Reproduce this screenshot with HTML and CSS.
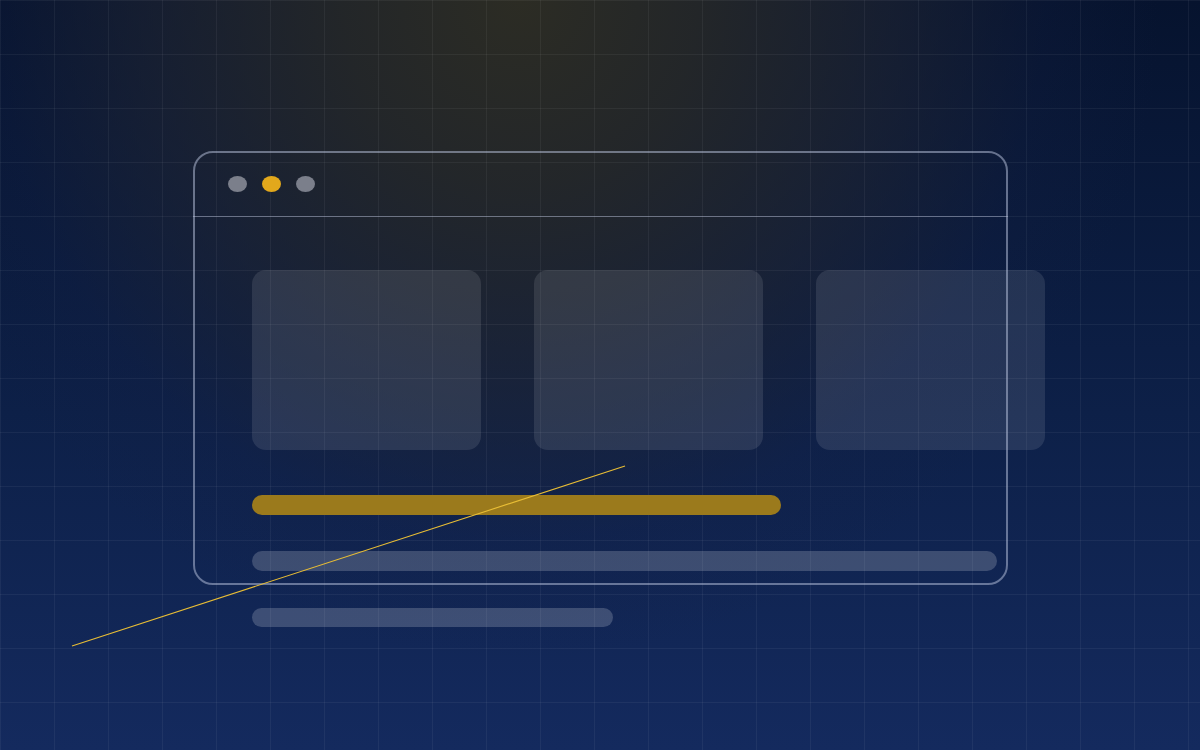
FILE: index.html
```html
<!DOCTYPE html>
<html lang="en">
<head>
<meta charset="utf-8">
<title>Browser illustration</title>
<link rel="stylesheet" href="styles.css">
</head>
<body>
<div class="stage">
  <div class="window">
    <div class="window-bar">
      <span class="dot dot-grey"></span>
      <span class="dot dot-gold"></span>
      <span class="dot dot-grey"></span>
    </div>
    <div class="window-body">
      <div class="cards">
        <div class="card"></div>
        <div class="card"></div>
        <div class="card"></div>
      </div>
      <div class="bar bar-gold"></div>
      <div class="bar bar-long"></div>
      <div class="bar bar-short"></div>
    </div>
  </div>
  <svg class="streak" width="1200" height="750" viewBox="0 0 1200 750" aria-hidden="true">
    <line x1="72" y1="646" x2="625" y2="466" stroke="#e8bd35" stroke-width="1.1"/>
  </svg>
</div>
</body>
</html>
```

FILE: styles.css
```css
html, body {
  margin: 0;
  padding: 0;
  width: 1200px;
  height: 750px;
  overflow: hidden;
  font-family: "Liberation Sans", Arial, sans-serif;
}

.stage {
  position: relative;
  width: 1200px;
  height: 750px;
  box-sizing: border-box;
  padding: 151px 0 0 193px;
  background-color: #0c1d44;
  background-image:
    linear-gradient(to right, rgba(255,255,255,0.05) 1px, transparent 1px),
    linear-gradient(to bottom, rgba(255,255,255,0.05) 1px, transparent 1px),
    radial-gradient(ellipse 640px 660px at 520px 0px, rgba(44,44,36,1) 0%, rgba(38,40,40,0.9) 28%, rgba(32,37,50,0.6) 58%, rgba(22,32,66,0.2) 82%, rgba(20,32,70,0) 100%),
    linear-gradient(to bottom, #06132e 0%, #0d2048 55%, #142a5e 100%);
  background-size: 54px 54px, 54px 54px, 100% 100%, 100% 100%;
  background-position: 0 0, 0 0, 0 0, 0 0;
  overflow: hidden;
}

.window {
  position: relative;
  width: 815px;
  height: 434px;
  box-sizing: border-box;
}

.window::after {
  content: "";
  position: absolute;
  inset: 0;
  border: 2px solid rgba(190, 200, 225, 0.5);
  border-radius: 20px;
  pointer-events: none;
}

.window-bar {
  height: 66px;
  box-sizing: border-box;
  display: flex;
  align-items: center;
  gap: 15px;
  padding: 0 0 0 35px;
  border-bottom: 1px solid rgba(190, 200, 225, 0.45);
}

.dot {
  width: 19px;
  height: 16px;
  border-radius: 50%;
  display: block;
}

.dot-grey { background: #7b7f8b; }
.dot-gold { background: #e2a81c; }

.window-body {
  padding: 53px 0 0 59px;
}

.cards {
  display: flex;
  gap: 53px;
  width: 793px;
}

.card {
  flex: 0 0 229px;
  height: 180px;
  border-radius: 14px;
  background: rgba(255, 255, 255, 0.1);
}

.bar {
  height: 20px;
  border-radius: 10px;
}

.bar-gold {
  width: 529px;
  margin-top: 45px;
  background: #9b7a1c;
}

.bar-long {
  width: 745px;
  margin-top: 36px;
  background: rgba(255, 255, 255, 0.19);
}

.bar-short {
  width: 361px;
  height: 19px;
  margin-top: 37px;
  background: rgba(255, 255, 255, 0.19);
}

.streak {
  position: absolute;
  left: 0;
  top: 0;
  pointer-events: none;
}
```
